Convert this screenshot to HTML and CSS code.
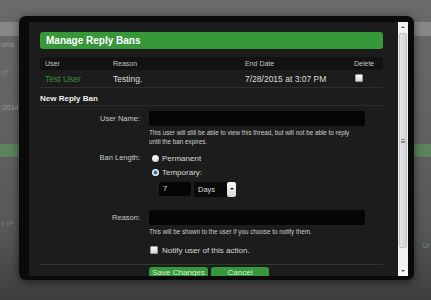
FILE: index.html
```html
<!DOCTYPE html>
<html>
<head>
<meta charset="utf-8">
<link rel="stylesheet" href="styles.css">
</head>
<body>
<div class="page">
  <div class="bg-strip"></div>
  <div class="bg-text t1">ums</div>
  <div class="bg-text green t2">ge</div>
  <div class="bg-text t3">/2014</div>
  <div class="bg-band"></div>
  <div class="bg-text dim t4">e IP</div>
  <div class="bg-text green right t5">Ur</div>
</div>

<div class="modal">
  <div class="content">
    <h2 class="title">Manage Reply Bans</h2>
    <div class="bans">
      <div class="bans-head">
        <span>User</span><span>Reason</span><span>End Date</span><span>Delete</span>
      </div>
      <div class="bans-row">
        <span class="user">Test User</span>
        <span>Testing.</span>
        <span>7/28/2015 at 3:07 PM</span>
        <span><span class="check"></span></span>
      </div>
    </div>

    <h3 class="section">New Reply Ban</h3>

    <div class="form-row first">
      <div class="label">User Name:</div>
      <div class="field">
        <div class="input wide"></div>
        <p class="hint">This user will still be able to view this thread, but will not be able to reply<br>until the ban expires.</p>
      </div>
    </div>

    <div class="form-row ban">
      <div class="label">Ban Length:</div>
      <div class="field">
        <div class="choice"><span class="radio"></span>Permanent</div>
        <div class="choice"><span class="radio on"></span>Temporary:</div>
        <div class="length">
          <div class="input num">7</div>
          <div class="select"><span>Days</span><span class="arrow"></span></div>
        </div>
      </div>
    </div>

    <div class="form-row reason">
      <div class="label">Reason:</div>
      <div class="field">
        <div class="input wide"></div>
        <p class="hint">This will be shown to the user if you choose to notify them.</p>
        <div class="notify"><span class="check"></span>Notify user of this action.</div>
      </div>
    </div>

    <div class="footer">
      <span class="button">Save Changes</span>
      <span class="button">Cancel</span>
    </div>
  </div>
  <div class="scrollbar">
    <div class="sb-btn up"></div>
    <div class="sb-track">
      <div class="sb-thumb"><span class="grip"></span></div>
    </div>
    <div class="sb-btn down"></div>
  </div>
</div>
</body>
</html>
```
FILE: styles.css
```css
html, body {
  margin: 0;
  padding: 0;
}
body {
  width: 431px;
  height: 300px;
  overflow: hidden;
  position: relative;
  font-family: "Liberation Sans", Arial, sans-serif;
  background: linear-gradient(#6a6a6a 0, #626262 120px, #575757 230px, #3e3e3e 300px);
}

/* backdrop page */
.page {
  display: flex;
  flex-direction: column;
  padding-top: 22px;
}
.bg-strip {
  height: 14px;
  background: #888;
}
.bg-text {
  font-size: 7px;
  line-height: 8px;
  color: #9a9a9a;
  padding-left: 1px;
}
.bg-text.green { color: #6c8f6c; }
.bg-text.dim { color: #7a7a7a; }
.bg-text.right { text-align: right; padding-right: 1px; }
.t1 { margin-top: 5px; }
.t2 { margin-top: 19px; }
.t3 { margin-top: 28px; }
.bg-band {
  margin-top: 32px;
  height: 13px;
  background: #5b845b;
}
.t4 { margin-top: 63px; }
.t5 { margin-top: 14px; }

/* modal */
.modal {
  position: absolute;
  left: 19px;
  top: 16px;
  width: 395px;
  height: 264px;
  box-sizing: border-box;
  padding: 6px 6px 4px 10px;
  background: #0a0a0a;
  border-radius: 7px;
  box-shadow: 0 2px 10px rgba(0,0,0,0.55);
  display: flex;
}
.content {
  flex: 1;
  overflow: hidden;
  background: #1c1c1c;
  padding: 10px 15px 0 11px;
  color: #d8d8d8;
}
.title {
  margin: 0;
  height: 17px;
  line-height: 17px;
  padding-left: 6px;
  background: #37983a;
  border-radius: 3px;
  color: #fff;
  font-size: 10px;
  font-weight: bold;
}

.bans { margin-top: 8px; }
.bans-head, .bans-row {
  display: grid;
  grid-template-columns: 68px 132px 109px 1fr;
  align-items: center;
}
.bans-head span, .bans-row > span { padding-left: 5px; }
.bans-head {
  height: 13px;
  background: #121212;
  border-radius: 3px;
  font-size: 7px;
  color: #c4c4c4;
}
.bans-row {
  height: 17px;
  border-bottom: 1px solid #2e2e2e;
  font-size: 8.5px;
  color: #dcdcdc;
}
.bans-row .user { color: #3b8f3e; }
.check {
  display: inline-block;
  width: 6px;
  height: 6px;
  border: 1px solid #9a9a9a;
  background: linear-gradient(#fff, #d6d6d6);
  border-radius: 1px;
  vertical-align: middle;
}
.bans-row .check { margin-left: 1px; margin-top: -3px; }

.section {
  margin: 4px 0 0 0;
  height: 13px;
  line-height: 13px;
  font-size: 8px;
  font-weight: bold;
  color: #f0f0f0;
  border-bottom: 1px solid #2a2a2a;
}

.form-row {
  display: grid;
  grid-template-columns: 100px 1fr;
  column-gap: 9px;
}
.form-row.first { margin-top: 5px; }
.form-row.ban { margin-top: 5px; }
.form-row.reason { margin-top: 13px; }
.label {
  text-align: right;
  font-size: 7.5px;
  color: #c8c8c8;
  line-height: 15px;
}
.form-row.ban .label { line-height: 14px; }
.field { display: flex; flex-direction: column; }
.input {
  height: 15px;
  box-sizing: border-box;
  background: #050505;
  border-radius: 2px;
}
.input.wide { width: 216px; }
.hint {
  margin: 2px 0 0 0;
  font-size: 6.3px;
  line-height: 9px;
  color: #cfcfcf;
}
.choice {
  display: flex;
  align-items: center;
  height: 14px;
  font-size: 8px;
  color: #d8d8d8;
}
.radio {
  width: 7px;
  height: 7px;
  box-sizing: border-box;
  border-radius: 50%;
  background: radial-gradient(circle at 40% 35%, #fff 0, #ddd 60%, #aaa 100%);
  margin: 0 3px 0 3px;
}
.radio.on {
  background: radial-gradient(circle, #1d5d98 0, #3a7cc0 35%, #cfe0ee 45%, #fff 70%, #aab 100%);
}
.length {
  display: flex;
  gap: 3px;
  margin: 3px 0 0 10px;
}
.input.num {
  width: 32px;
  height: 14px;
  font-size: 7.5px;
  line-height: 14px;
  padding-left: 4px;
  color: #ddd;
}
.select {
  width: 42px;
  height: 15px;
  background: #0a0a0a;
  border-radius: 2px;
  display: flex;
  justify-content: space-between;
  font-size: 7.5px;
  line-height: 15px;
  color: #ddd;
  padding-left: 4px;
  box-sizing: border-box;
}
.arrow {
  width: 9px;
  height: 15px;
  background: linear-gradient(#fafafa, #d8d8d8);
  border-radius: 2px;
  position: relative;
}
.arrow::after {
  content: "";
  position: absolute;
  left: 3px;
  top: 6px;
  border-left: 2px solid transparent;
  border-right: 2px solid transparent;
  border-top: 2px solid #111;
}
.notify {
  display: flex;
  align-items: center;
  margin-top: 8px;
  height: 12px;
  font-size: 8px;
  color: #d8d8d8;
}
.notify .check { margin: 0 4px 0 1px; }

.footer {
  margin-top: 8px;
  border-top: 1px solid #333;
  padding: 2px 0 0 109px;
  display: flex;
  gap: 3px;
}
.button {
  display: inline-block;
  height: 18px;
  line-height: 11px;
  text-align: center;
  background: #36983a;
  border-radius: 3px 3px 0 0;
  color: #d6f0d6;
  font-size: 8px;
}
.button:first-child { width: 59px; }
.button:last-child { width: 58px; }

/* scrollbar */
.scrollbar {
  width: 10px;
  display: flex;
  flex-direction: column;
  background: #f1f1f1;
}
.sb-btn {
  height: 10px;
  position: relative;
  background: #f4f4f4;
}
.sb-btn::after {
  content: "";
  position: absolute;
  left: 3px;
  border-left: 2px solid transparent;
  border-right: 2px solid transparent;
}
.sb-btn.up::after { top: 4px; border-bottom: 2px solid #555; }
.sb-btn.down::after { top: 4px; border-top: 2px solid #555; }
.sb-track {
  flex: 1;
  padding: 1px 1px 18px 1px;
  display: flex;
}
.sb-thumb {
  flex: 1;
  background: linear-gradient(90deg, #e4e4e4, #d4d4d4);
  border: 1px solid #c4c4c4;
  border-radius: 2px;
  display: flex;
  align-items: center;
  justify-content: center;
}
.grip {
  width: 4px;
  height: 4px;
  border-top: 1px solid #888;
  border-bottom: 1px solid #888;
  box-sizing: border-box;
  background: linear-gradient(transparent 1px, #888 1px, #888 2px, transparent 2px);
}
```
